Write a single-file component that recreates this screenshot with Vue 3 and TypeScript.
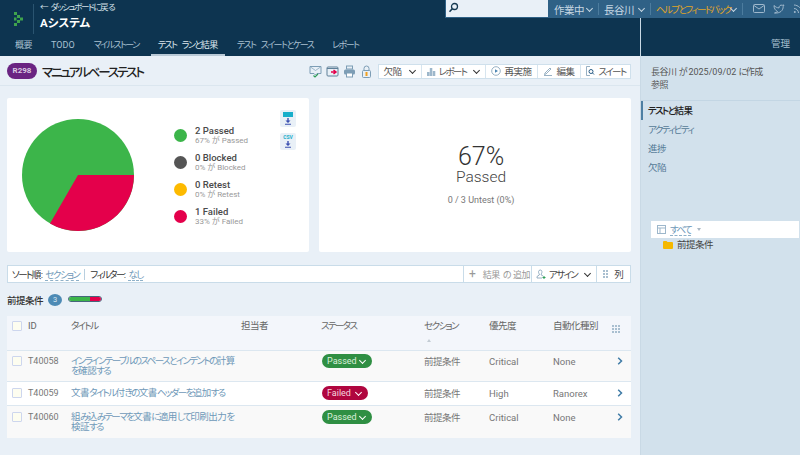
<script setup lang="ts">
import { h } from 'vue'

const J = (props: { t: string }) =>
  (props.t.match(/[\u3040-\u30ff]+|[\u4e00-\u9fff]+|[^\u3040-\u30ff\u4e00-\u9fff]+/g) ?? []).map((run) => {
    const c = run.charCodeAt(0)
    if (c >= 0x3040 && c <= 0x30ff) return h('span', { class: 'kn' }, run)
    if (c >= 0x4e00 && c <= 0x9fff) return h('span', { class: 'hn' }, run)
    return h('span', run)
  })
J.props = ['t']

const tabs = ['概要', 'TODO', 'マイルストーン', 'テスト ランと結果', 'テスト スイートとケース', 'レポート']
const legend = [
  { n: '2 Passed', s: '67% が Passed', c: '#3cb54a' },
  { n: '0 Blocked', s: '0% が Blocked', c: '#555555' },
  { n: '0 Retest', s: '0% が Retest', c: '#fdba00' },
  { n: '1 Failed', s: '33% が Failed', c: '#e4004b' },
]
const rows = [
  { id: 'T40058', t: 'インラインテーブルのスペースとインデントの計算を確認する', st: 'Passed', p: 'Critical', a: 'None' },
  { id: 'T40059', t: '文書タイトル付きの文書ヘッダーを追加する', st: 'Failed', p: 'High', a: 'Ranorex' },
  { id: 'T40060', t: '組み込みテーマを文書に適用して印刷出力を検証する', st: 'Passed', p: 'Critical', a: 'None' },
]
</script>

<template>
  <div class="page">
    <div class="body">
      <div class="left">
        <header class="hdr">
          <div class="hdr-top">
            <div class="brand">
              <svg class="logo" width="10" height="14" viewBox="0 0 10 14">
                <g fill="#3fa34d">
                  <rect x="0" y="0" width="3" height="3" /><rect x="3" y="3" width="3" height="3" />
                  <rect x="6" y="5.5" width="3" height="3" /><rect x="3" y="8" width="3" height="3" />
                  <rect x="0" y="11" width="3" height="3" /><rect x="0" y="5.5" width="2.5" height="3" />
                </g>
              </svg>
              <div class="titles">
                <div class="back"><J t="← ダッシュボードに戻る" /></div>
                <div class="proj">Aシステム</div>
              </div>
            </div>
          </div>
          <nav class="tabs">
            <a v-for="(t, i) in tabs" :key="t" class="tab" :class="{ on: i === 3 }"><J :t="t" /></a>
          </nav>
        </header>

        <main class="main">
          <div class="title-bar">
            <span class="badge">R298</span>
            <h1 class="h1"><J t="マニュアルベーステスト" /></h1>
            <div class="tool-icons">
              <svg width="13" height="13" viewBox="0 0 13 13" fill="none"><path d="M1 1.500h11v7H8L6.500 10 5 8.500H1z" stroke="#7d9db5" /><path d="M1.500 2l5 3.500 5-3.500" stroke="#7d9db5" stroke-width=".7" /><path d="M4.500 10.500l1.500 1.500 3-3" stroke="#2f9e58" stroke-width="1.200" /></svg>
              <svg width="13" height="13" viewBox="0 0 13 13" fill="none"><rect x="1" y="2" width="11" height="9" rx="1" stroke="#5f8099" /><path d="M1 3.500h11" stroke="#5f8099" /><path d="M5 7h4M7.500 5l2.500 2-2.500 2" stroke="#e4004b" stroke-width="1.500" /></svg>
              <svg width="13" height="13" viewBox="0 0 13 13" fill="none"><rect x="1" y="4.500" width="11" height="5" rx="1.500" fill="#7d9db5" /><rect x="3.500" y="1" width="6" height="3" stroke="#7d9db5" /><rect x="3.500" y="8" width="6" height="4" fill="#fff" stroke="#7d9db5" /></svg>
              <svg width="13" height="13" viewBox="0 0 13 13" fill="none"><rect x="2.500" y="5.500" width="8" height="7" rx="1" stroke="#7d9db5" /><path d="M4 5.500V3.500a2.500 2.500 0 0 1 5 0v2" stroke="#7d9db5" /><rect x="5.500" y="7" width="2" height="4" fill="#f0a020" /></svg>
            </div>
            <div class="btns">
              <button class="btn w43"><J t="欠陥" /><span class="chev dark" /></button>
              <button class="btn w64">
                <svg width="10" height="10" viewBox="0 0 10 10"><path d="M1 10V6h2.500v4zM3.800 10V2h2.500v8zM6.800 10V5h2.500v5z" fill="#9db7cb" /></svg><J t="レポート" /><span class="chev dark" />
              </button>
              <button class="btn w52">
                <svg width="10" height="10" viewBox="0 0 10 10" fill="none"><circle cx="5" cy="5" r="4.300" stroke="#7d9db5" stroke-width=".8" /><path d="M4 3.200L7 5 4 6.800z" fill="#4c86b3" /></svg><J t="再実施" />
              </button>
              <button class="btn w43">
                <svg width="10" height="10" viewBox="0 0 10 10" fill="none"><path d="M2 7l5-5 1 1-5 5-1.500.500zM1 9.500h8" stroke="#7d9db5" stroke-width=".8" /></svg><J t="編集" />
              </button>
              <button class="btn w50">
                <svg width="10" height="10" viewBox="0 0 10 10" fill="none"><path d="M5 .500H1.500v9H5" stroke="#7d9db5" stroke-width=".8" /><circle cx="6" cy="5.500" r="2" stroke="#2a5d86" /><path d="M7.500 7L9 8.500" stroke="#2a5d86" /></svg><J t="スイート" />
              </button>
            </div>
          </div>

          <div class="cards">
            <section class="card chart">
              <svg class="pie" width="114" height="114" viewBox="0 0 114 114">
                <circle cx="57" cy="57" r="56" fill="#3cb54a" />
                <path d="M57 57H113A56 56 0 0 1 29 105.500Z" fill="#e4004b" />
              </svg>
              <ul class="legend">
                <li v-for="l in legend" :key="l.n">
                  <span class="dot" :style="{ background: l.c }" />
                  <div>
                    <div class="ln">{{ l.n }}</div>
                    <div class="ls">{{ l.s }}</div>
                  </div>
                </li>
              </ul>
              <div class="exports">
                <span class="exp">
                  <i class="exp-top" />
                  <svg width="8" height="7" viewBox="0 0 8 7"><path d="M4 0v3" stroke="#3b4fb0" stroke-width="1.400" /><path d="M1.500 2.500h5L4 5zM1 5.800h6v1H1z" fill="#3b4fb0" /></svg>
                </span>
                <span class="exp">
                  <b>CSV</b>
                  <svg width="8" height="7" viewBox="0 0 8 7"><path d="M4 0v3" stroke="#3b4fb0" stroke-width="1.400" /><path d="M1.500 2.500h5L4 5zM1 5.800h6v1H1z" fill="#3b4fb0" /></svg>
                </span>
              </div>
            </section>
            <section class="card stat">
              <div class="pct">67%</div>
              <div class="pl">Passed</div>
              <div class="un">0 / 3 Untest (0%)</div>
            </section>
          </div>

          <div class="filter">
            <div class="f-left">
              <span><J t="ソート順:" /> <a class="dash"><J t="セクション" /></a></span>
              <span class="sep" />
              <span><J t="フィルター:" /> <a class="dash"><J t="なし" /></a></span>
            </div>
            <button class="fbtn muted w68"><span class="plus">+</span><J t="結果の追加" /></button>
            <button class="fbtn w65">
              <svg width="10" height="10" viewBox="0 0 10 10" fill="none"><path d="M3 1.500a2 2 0 0 1 2.500 0c.8 1 .5 2.500-.3 3.500v1l2 1M3 1.500c-.8 1-.5 2.500.3 3.500v1L1 7.500V9h5" stroke="#7d9db5" stroke-width=".8" /><path d="M8 7v3M6.500 8.500h3" stroke="#2f9e58" /></svg><J t="アサイン" /><span class="chev dark" />
            </button>
            <button class="fbtn w33">
              <svg width="8" height="8" viewBox="0 0 8 8"><path d="M0 0h2v2H0zM3 0h2v2H3zM0 3h2v2H0zM3 3h2v2H3zM0 6h2v2H0zM3 6h2v2H3z" fill="#a9bfd0" /></svg>列
            </button>
          </div>

          <div class="sec-head">
            <strong><J t="前提条件" /></strong>
            <span class="count">3</span>
            <span class="bar"><i class="g" /><i class="r" /></span>
          </div>

          <div class="table">
            <div class="row head">
              <span class="check" />
              <span>ID</span>
              <span><J t="タイトル" /></span>
              <span><J t="担当者" /></span>
              <span><J t="ステータス" /></span>
              <span><J t="セクション" /><em class="sort" /></span>
              <span><J t="優先度" /></span>
              <span><J t="自動化種別" /></span>
              <svg class="cols" width="9" height="8" viewBox="0 0 9 8"><path d="M0 0h2v2H0zM3 0h2v2H3zM6 0h2v2H6zM0 3h2v2H0zM3 3h2v2H3zM6 3h2v2H6zM0 6h2v2H0zM3 6h2v2H3zM6 6h2v2H6z" fill="#a9bfd0" /></svg>
            </div>
            <div v-for="(r, i) in rows" :key="r.id" class="row item" :class="{ odd: i !== 1 }">
              <span class="check" />
              <span class="cell id">{{ r.id }}</span>
              <a class="link"><J :t="r.t" /></a>
              <span />
              <span class="pill" :class="r.st === 'Passed' ? 'pass' : 'fail'">{{ r.st }}<span class="chev white" /></span>
              <span class="cell"><J t="前提条件" /></span>
              <span class="cell">{{ r.p }}</span>
              <span class="cell">{{ r.a }}</span>
              <svg class="arrow" width="6" height="8" viewBox="0 0 6 8" fill="none"><path d="M1.200 .8L4.500 4 1.200 7.200" stroke="#3f7ba6" stroke-width="1.500" /></svg>
            </div>
          </div>
        </main>
      </div>

      <aside class="side">
        <div class="top-bar">
          <div class="search">
            <svg width="11" height="11" viewBox="0 0 11 11" fill="none"><circle cx="6.500" cy="4.500" r="3" stroke="#173a52" stroke-width="1.300" /><path d="M4.300 6.800L1.500 9.800" stroke="#173a52" stroke-width="1.600" /></svg>
          </div>
          <span class="tb-item w50t"><J t="作業中" /><span class="chev light" /></span>
          <span class="tb-item w52t"><J t="長谷川" /><span class="chev light" /></span>
          <span class="tb-item help"><J t="ヘルプとフィードバック" /><span class="chev light" /></span>
          <span class="tb-icons">
            <svg width="12" height="9" viewBox="0 0 12 9" fill="none"><rect x=".5" y=".5" width="11" height="8" rx="1" stroke="#9fb8cc" /><path d="M1 1.500l5 3.500 5-3.500" stroke="#9fb8cc" /></svg>
            <svg width="12" height="10" viewBox="0 0 12 10" fill="none"><path d="M1 1.500c1.500 1.500 3 2.300 5 2.400C6 2 7.500.5 9.300 1.300L11 1l-.8 1.500c0 4-3 7-8.700 6.500 1.500-.3 2.500-.8 3-1.500C2.500 6.500 1 4.500 1 1.500z" stroke="#9fb8cc" /></svg>
            <svg width="12" height="10" viewBox="0 0 12 10" fill="none"><path d="M1 1c4 0 8 3.500 8 8M1 4.500c2.500 0 4.500 2 4.500 4.500" stroke="#9fb8cc" /><circle cx="1.800" cy="8" r="1" fill="#9fb8cc" /></svg>
          </span>
        </div>
        <div class="admin-row"><a class="admin">管理</a></div>
        <div class="side-body">
          <div class="meta">
            <div><J t="長谷川 が 2025/09/02 に作成" /></div>
            <div><J t="参照" /></div>
          </div>
          <ul class="side-nav">
            <li class="active"><J t="テストと結果" /></li>
            <li><J t="アクティビティ" /></li>
            <li><J t="進捗" /></li>
            <li><J t="欠陥" /></li>
          </ul>
          <div class="tree-box">
            <svg width="9" height="9" viewBox="0 0 9 9" fill="none"><rect x=".5" y=".5" width="8" height="8" stroke="#9db7cb" /><path d="M.5 3h8M3 3v5.500" stroke="#9db7cb" /></svg>
            <a class="dash"><J t="すべて" /></a>
            <span class="caret" />
          </div>
          <div class="tree-item">
            <svg width="10" height="8" viewBox="0 0 10 8"><path d="M0 1a1 1 0 0 1 1-1h2.500l1 1H9a1 1 0 0 1 1 1v5a1 1 0 0 1-1 1H1a1 1 0 0 1-1-1z" fill="#f5b800" /></svg>
            <J t="前提条件" />
          </div>
        </div>
      </aside>
    </div>
  </div>
</template>

<style>
html, body { margin: 0; padding: 0; background: #e9f0f7; }
.kn { letter-spacing: -0.17em; }
.hn { letter-spacing: -0.05em; }
</style>

<style scoped>
.page {
  width: 800px; height: 455px; overflow: hidden;
  font-family: Roboto, "Noto Sans CJK JP", sans-serif;
  font-feature-settings: "palt";
  font-size: 9.500px; color: #555;
}
ul { list-style: none; margin: 0; padding: 0; }
button { font: inherit; font-feature-settings: inherit; border: 0; background: none; padding: 0; margin: 0; }
.body { display: flex; height: 455px; }
.left { width: 640px; flex: none; display: flex; flex-direction: column; }

/* header */
.hdr { background: #0d3450; height: 56px; display: flex; flex-direction: column; }
.hdr-top { height: 37px; flex: none; }
.brand { display: flex; align-items: center; padding-left: 14px; height: 37px; }
.logo { margin-right: 9px; }
.titles { border-left: 1px solid #2a5470; padding: 0 0 0 6px; height: 30px; }
.back { font-size: 8.500px; line-height: 12px; color: #d5e0e8; margin-top: -3px; }
.proj { font-size: 11.500px; line-height: 14px; color: #fff; font-weight: 700; margin-top: 3px; }
.tabs { display: flex; gap: 5px; padding-left: 8px; height: 19px; font-size: 9px; word-spacing: 3px; }
.tab { padding: 0 7px; color: #a9c0d0; line-height: 17px; height: 19px; box-sizing: border-box; white-space: nowrap; }
.tab.on { color: #dfe8ee; border-bottom: 2px solid #b9c9d6; }

/* main */
.main { flex: 1; background: #e9f0f7; padding: 0 9px 0 7px; min-height: 0; }
.title-bar { display: flex; align-items: center; height: 28px; padding: 1px 9px 0 7px; border-bottom: 1px solid #dbe6ef; margin: 0 -9px 0 -7px; }
.badge { background: #6a2482; color: #d9c9e0; font-size: 8px; font-weight: 700; border-radius: 8px; width: 30px; height: 16px; line-height: 16px; text-align: center; flex: none; }
.h1 { margin: 0 0 0 5px; font-size: 12.500px; font-weight: 500; color: #222; flex: 1; }
.tool-icons { display: flex; gap: 4px; margin-right: 5px; }
.btns { display: flex; background: #fff; border: 1px solid #cfe0ec; height: 15px; box-sizing: border-box; }
.btn { display: flex; align-items: center; justify-content: center; gap: 3px; border-right: 1px solid #d7e5ef; color: #555; box-sizing: border-box; height: 13px; white-space: nowrap; }
.btn:last-child { border-right: 0; }
.w43 { width: 43px; } .w64 { width: 64px; } .w52 { width: 52px; } .w50 { width: 49px; }
.chev { display: inline-block; width: 4px; height: 4px; border-right: 1.500px solid; border-bottom: 1.500px solid; transform: rotate(45deg); margin: -2px 2px 0 5px; flex: none; }
.chev.dark { color: #333; }
.chev.white { color: #fff; }
.chev.light { color: #c6d6e2; }

.cards { display: flex; gap: 10px; margin-top: 12px; }
.card { background: #fff; height: 154px; border-radius: 2px; box-sizing: border-box; }
.chart { width: 302px; display: flex; align-items: center; padding-left: 14px; position: relative; }
.pie { flex: none; }
.legend { margin: 2px 0 0 39px; display: flex; flex-direction: column; gap: 5px; }
.legend li { display: flex; align-items: center; gap: 8px; height: 22px; }
.dot { width: 13px; height: 13px; border-radius: 50%; flex: none; }
.ln { font-size: 9.500px; line-height: 11px; font-weight: 500; color: #4a4a4a; }
.ls { font-size: 8px; line-height: 10px; color: #999; }
.exports { position: absolute; left: 273px; top: 12px; display: flex; flex-direction: column; gap: 6px; }
.exp { width: 16px; height: 17px; background: #e9f0f7; border-radius: 2px; display: flex; flex-direction: column; align-items: center; justify-content: center; gap: 1px; }
.exp-top { width: 10px; height: 5px; background: #18aeca; display: block; }
.exp b { font-size: 5px; line-height: 5px; color: #18aeca; font-style: normal; }
.stat { flex: 1; width: 312px; text-align: center; color: #444; padding: 47px 0 0 12px; }
.pct { font-size: 25px; line-height: 24px; color: #333; font-weight: 300; }
.pl { font-size: 15.500px; line-height: 16px; color: #444; font-weight: 300; }
.un { font-size: 9px; line-height: 12px; color: #777; margin-top: 9px; }

.filter { display: flex; align-items: stretch; margin-top: 13px; background: #fff; border: 1px solid #c9dce9; height: 18px; box-sizing: border-box; }
.f-left { flex: 1; display: flex; align-items: center; padding-left: 4px; color: #333; gap: 5px; }
.sep { width: 1px; height: 11px; background: #b9cfdf; }
.dash { color: #6e98b8; border-bottom: 1px dashed #8fb1c9; line-height: 11px; display: inline-block; }
.fbtn { display: flex; align-items: center; justify-content: center; gap: 3px; border-left: 1px solid #c9dce9; color: #444; white-space: nowrap; }
.muted { color: #999; font-size: 9px; padding-left: 4px; }
.plus { font-size: 12px; margin-right: 4px; line-height: 10px; }
.w68 { width: 68px; } .w65 { width: 65px; } .w33 { width: 34px; }

.sec-head { display: flex; align-items: center; height: 14px; margin-top: 10px; color: #333; }
.sec-head strong { font-weight: 500; }
.count { width: 14px; height: 12px; border-radius: 50%; background: #4d8ab5; color: #dbe8f1; font-size: 7.500px; text-align: center; line-height: 12px; margin-left: 5px; margin-right: 6px; }
.bar { display: flex; width: 34px; height: 6px; border-radius: 3px; overflow: hidden; border: 1px solid #46667c; box-sizing: border-box; margin-top: -3px; }
.bar .g { flex: 2; background: #3cb54a; }
.bar .r { flex: 1; background: #e4004b; }

.table { margin-top: 9px; }
.row { display: grid; grid-template-columns: 16px 43px 170px 80px 103px 65px 64px 55px 1fr; padding-left: 5px; box-sizing: border-box; }
.row > * { min-width: 0; }
.head { background: #f3f6fb; height: 35px; border-bottom: 1px solid #dce7f0; padding-top: 4px; color: #666; line-height: 12px; }
.check { width: 10px; height: 10px; box-sizing: border-box; background: #fdfdf0; border: 1px solid #cdd6ee; border-radius: 1px; margin-top: 1px; }
.sort { display: block; width: 0; height: 0; margin: 7px 0 0 3px; border-left: 2.500px solid transparent; border-right: 2.500px solid transparent; border-bottom: 3px solid #c3ccd4; }
.cols { margin: 5px 0 0 4px; }
.item { background: #fff; border-bottom: 1px solid #dce7f0; padding-top: 6px; padding-bottom: 5px; line-height: 10px; }
.item:nth-child(2) { padding-top: 5px; }
.item.odd { background: #f9f9f9; }
.item:last-child { border-bottom: 0; padding-bottom: 6px; }
.item .check { margin-top: 0; }
.cell { color: #777; line-height: 11px; }
.id { font-size: 9px; }
.link { color: #6e98b8; padding-right: 3px; }
.pill { display: inline-flex; align-items: center; justify-content: space-between; box-sizing: border-box; height: 14px; margin: -2px 0 0 1px; border-radius: 7px; padding: 0 5px; color: #dcefdc; justify-self: start; line-height: 14px; font-size: 9px; }
.pill.pass { background: #2f8f43; width: 50px; }
.pill.fail { background: #b0063f; width: 46px; color: #f5d5df; }
.pill .chev { margin-left: 0; }
.arrow { margin: 1px 0 0 9px; }

/* side */
.side { flex: 1; background: #d2e1ec; display: flex; flex-direction: column; position: relative; border-left: 1px solid #c9d9e5; box-sizing: border-box; min-width: 0; }
.top-bar { position: absolute; right: 0; top: 0; width: 355px; height: 18px; background: #2f6186; display: flex; align-items: center; overflow: hidden; }
.search { width: 102px; height: 17px; background: #e9f0f7; margin: 0 1px 1px 1px; padding: 2px 0 0 2px; box-sizing: border-box; flex: none; }
.tb-item { color: #c6d6e2; white-space: nowrap; display: flex; align-items: center; padding: 0 4px 0 5px; border-right: 1px solid #4c7c9e; height: 12px; box-sizing: border-box; justify-content: space-between; flex: none; }
.tb-item .chev { margin-left: 0; }
.w50t { width: 50px; font-size: 10.500px; } .w52t { width: 52px; font-size: 10.500px; }
.help { color: #e0a526; width: 92px; }
.tb-icons { display: flex; gap: 8px; padding-left: 10px; flex: none; }
.admin-row { background: #0d3450; height: 56px; box-sizing: border-box; text-align: right; padding: 38px 10px 0 0; }
.admin { color: #a9c0d0; line-height: 12px; display: block; }
.side-body { flex: 1; padding-top: 10px; color: #555; position: relative; }
.meta { padding-left: 10px; line-height: 13px; color: #555; height: 28px; border-bottom: 1px solid #c3d6e4; padding-bottom: 6px; font-size: 9px; }
.side-nav li { height: 19px; line-height: 19px; padding-left: 7px; color: #557a96; }
.side-nav li.active { color: #222; font-weight: 500; border-left: 2px solid #4d7fa3; padding-left: 5px; }
.tree-box { position: absolute; top: 165px; left: 10px; width: 148px; height: 17px; background: #fff; display: flex; align-items: center; gap: 4px; padding-left: 6px; box-sizing: border-box; }
.caret { width: 0; height: 0; border-left: 2.500px solid transparent; border-right: 2.500px solid transparent; border-top: 3px solid #aab8c4; margin-left: 2px; }
.tree-item { position: absolute; top: 182px; left: 22px; display: flex; align-items: center; gap: 4px; color: #444; line-height: 13px; }
</style>
